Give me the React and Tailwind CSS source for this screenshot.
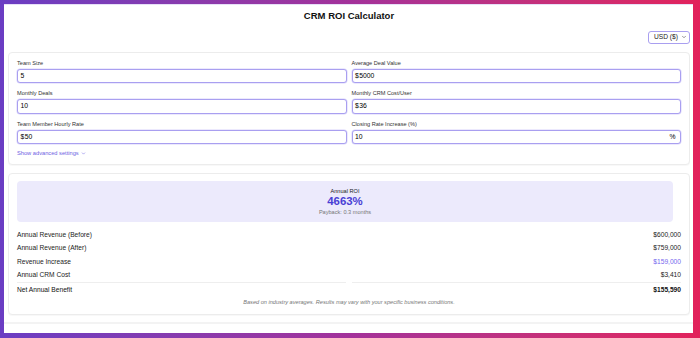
import { ChevronDown } from "lucide-react";

const fields = [
  [
    { label: "Team Size", value: "5" },
    { label: "Monthly Deals", value: "10" },
    { label: "Team Member Hourly Rate", value: "50", prefix: "$" },
  ],
  [
    { label: "Average Deal Value", value: "5000", prefix: "$" },
    { label: "Monthly CRM Cost/User", value: "36", prefix: "$" },
    { label: "Closing Rate Increase (%)", value: "10", suffix: "%" },
  ],
];

const rows = [
  { label: "Annual Revenue (Before)", value: "$600,000" },
  { label: "Annual Revenue (After)", value: "$759,000" },
  { label: "Revenue Increase", value: "$159,000", accent: true },
  { label: "Annual CRM Cost", value: "$3,410" },
];

const Field = ({ label, value, prefix, suffix }) => (
  <div className="flex flex-col">
    <label className="text-[5.6px] leading-[8px] text-[#333]">{label}</label>
    <div className="mt-[2px] flex h-[14.4px] items-center rounded-[3px] border border-[#a99ff0] bg-white px-[2.5px] text-[6.8px] text-black shadow-[0_0_0_0.5px_#d9d4fb]">
      {prefix && <span className="mr-[0.5px]">{prefix}</span>}
      <span className="flex-1">{value}</span>
      {suffix && <span className="mr-[2px]">{suffix}</span>}
    </div>
  </div>
);

export default function App() {
  return (
    <div className="h-[338px] w-[700px] overflow-hidden bg-gradient-to-r from-[#6a3dc3] via-[#a3319a] to-[#e2215b] pt-[4px] font-['Liberation_Sans',Arial,sans-serif]">
      <div className="ml-[4px] flex h-[329px] w-[689px] flex-col overflow-hidden border-t border-[#e6e0f8] bg-white pl-[4px] pr-[3px] pt-[5px]">
        {/* title */}
        <h1 className="text-center text-[9.5px] font-bold leading-[12px] text-[#111]">CRM ROI Calculator</h1>

        <div className="mt-[9px] flex justify-end">
          <div className="flex h-[12.5px] w-[42px] items-center justify-between rounded-[3px] border border-[#a99ff0] pl-[5px] pr-[2px] text-[6.65px] text-[#222]">
            <span>USD ($)</span>
            <ChevronDown size={6} strokeWidth={2.5} className="text-[#555]" />
          </div>
        </div>

        {/* inputs */}
        <div className="mt-[8.5px] rounded-[4px] border border-[#ececec] bg-white px-[8px] pb-[6.5px] pt-[6px] shadow-[0_1px_1px_rgba(0,0,0,0.03)]">
          <div className="grid grid-cols-2 gap-x-[5px]">
            {fields.map((col, i) => (
              <div key={i} className="flex flex-col gap-[6px]">
                {col.map((f) => (
                  <Field key={f.label} {...f} />
                ))}
              </div>
            ))}
          </div>
          <div className="mt-[5px] flex items-center gap-[2px] text-[5.7px] leading-[8px] text-[#6e62e3]">
            <span>Show advanced settings</span>
            <ChevronDown size={5} strokeWidth={2.5} />
          </div>
        </div>

        {/* results */}
        <div className="mt-[8px] rounded-[4px] border border-[#ececec] bg-white px-[8px] pb-[8px] pt-[7.5px] shadow-[0_1px_1px_rgba(0,0,0,0.03)]">
          <div className="mr-[8px] flex h-[41px] flex-col items-center justify-center rounded-[4px] bg-[#eceafc]">
            <p className="text-[5.6px] leading-[7px] text-[#222]">Annual ROI</p>
            <p className="text-[11.4px] font-bold leading-[13px] text-[#4a3fd4]">4663%</p>
            <p className="mt-[1px] text-[5.6px] leading-[7px] text-[#777]">Payback: 0.3 months</p>
          </div>

          <div className="mt-[6px] flex flex-col">
            {rows.map((r) => (
              <div key={r.label} className="flex h-[13.33px] items-center justify-between text-[6.65px] text-[#222]">
                <span>{r.label}</span>
                <span className={r.accent ? "text-[#7566ee]" : "text-[#222]"}>{r.value}</span>
              </div>
            ))}
            <div className="mt-[1px] grid grid-cols-2 gap-x-[6px]">
              <div className="border-t border-[#eeeeee]" />
              <div className="border-t border-[#eeeeee]" />
            </div>
            <div className="flex h-[14px] items-center justify-between text-[6.65px] text-[#111]">
              <span className="font-medium">Net Annual Benefit</span>
              <span className="font-bold">$155,590</span>
            </div>
          </div>
          <p className="mt-[1px] text-center text-[5.6px] italic leading-[8px] text-[#777]">
            Based on industry averages. Results may vary with your specific business conditions.
          </p>
        </div>

        <div className="mt-[7px] -ml-[4px] -mr-[3px] flex-1 border-t-2 border-[#f3f3f3]" />
      </div>
    </div>
  );
}
